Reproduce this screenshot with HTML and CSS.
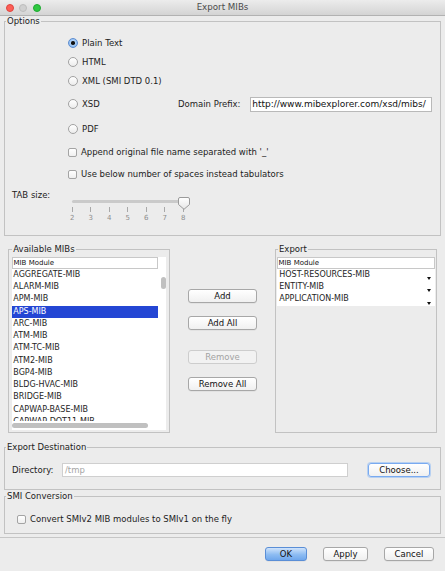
FILE: index.html
```html
<!DOCTYPE html>
<html lang="en">
<head>
<meta charset="utf-8">
<title>Export MIBs</title>
<link rel="stylesheet" href="styles.css">
</head>
<body>
<div class="titlebar">
  <div class="lights"><span class="light red"></span><span class="light gray"></span><span class="light green"></span></div>
  <div class="title">Export MIBs</div>
  <div></div>
</div>

<fieldset class="group options">
  <legend>Options</legend>
  <div class="options-body">
    <div class="opt r1"><span class="radio on"></span><span class="lbl">Plain Text</span></div>
    <div class="opt r2"><span class="radio"></span><span class="lbl">HTML</span></div>
    <div class="opt r3"><span class="radio"></span><span class="lbl">XML (SMI DTD 0.1)</span></div>
    <div class="opt r4">
      <div class="xsd-choice"><span class="radio"></span><span class="lbl">XSD</span></div>
      <span class="prefix-label">Domain Prefix:</span>
      <div class="field prefix">http://www.mibexplorer.com/xsd/mibs/</div>
    </div>
    <div class="opt r5"><span class="radio"></span><span class="lbl">PDF</span></div>
    <div class="opt r6"><span class="check"></span><span class="lbl">Append original file name separated with '_'</span></div>
    <div class="opt r7"><span class="check"></span><span class="lbl">Use below number of spaces instead tabulators</span></div>
    <div class="tab-row">
      <span class="tab-label">TAB size:</span>
      <div class="slider">
        <div class="track"></div>
        <div class="ticks">
          <span class="tick">2</span><span class="tick">3</span><span class="tick">4</span><span class="tick">5</span><span class="tick">6</span><span class="tick">7</span><span class="tick">8</span>
        </div>
        <svg class="thumb" width="12" height="13" viewBox="0 0 12 13"><defs><linearGradient id="tg" x1="0" y1="0" x2="0" y2="1"><stop offset="0" stop-color="#ffffff"/><stop offset="1" stop-color="#e6e6e6"/></linearGradient></defs><path d="M2 0.5H10Q11.5 0.5 11.5 2V7.5L6 12.3L0.5 7.5V2Q0.5 0.5 2 0.5Z" fill="url(#tg)" stroke="#9a9a9a" stroke-width="1"/></svg>
      </div>
    </div>
  </div>
</fieldset>

<div class="lists">
  <fieldset class="group mib-group avail">
    <legend>Available MIBs</legend>
    <div class="list-wrap">
      <div class="list">
        <div class="list-main">
          <div class="col-header">MIB Module</div>
          <div class="rows">
            <div class="row">AGGREGATE-MIB</div>
            <div class="row">ALARM-MIB</div>
            <div class="row">APM-MIB</div>
            <div class="row selected">APS-MIB</div>
            <div class="row">ARC-MIB</div>
            <div class="row">ATM-MIB</div>
            <div class="row">ATM-TC-MIB</div>
            <div class="row">ATM2-MIB</div>
            <div class="row">BGP4-MIB</div>
            <div class="row">BLDG-HVAC-MIB</div>
            <div class="row">BRIDGE-MIB</div>
            <div class="row">CAPWAP-BASE-MIB</div>
            <div class="row">CAPWAP-DOT11-MIB</div>
          </div>
          <div class="hscroll"><div class="hthumb"></div></div>
        </div>
        <div class="vscroll"><div class="vthumb"></div></div>
      </div>
    </div>
  </fieldset>

  <div class="mid-buttons">
    <div class="btn">Add</div>
    <div class="btn add-all">Add All</div>
    <div class="btn remove disabled">Remove</div>
    <div class="btn remove-all">Remove All</div>
  </div>

  <fieldset class="group mib-group export">
    <legend>Export</legend>
    <div class="export-wrap">
      <div class="col-header">MIB Module</div>
      <div class="export-rows">
        <div class="row"><span>HOST-RESOURCES-MIB</span><span class="arrow"></span></div>
        <div class="row"><span>ENTITY-MIB</span><span class="arrow"></span></div>
        <div class="row"><span>APPLICATION-MIB</span><span class="arrow"></span></div>
      </div>
    </div>
  </fieldset>
</div>

<fieldset class="group dest">
  <legend>Export Destination</legend>
  <div class="dest-body">
    <span class="dir-label">Directory:</span>
    <div class="field dir">/tmp</div>
    <div class="btn choose">Choose...</div>
  </div>
</fieldset>

<fieldset class="group smi">
  <legend>SMI Conversion</legend>
  <div class="smi-body">
    <span class="check"></span><span class="lbl">Convert SMIv2 MIB modules to SMIv1 on the fly</span>
  </div>
</fieldset>

<div class="footer">
  <div class="btn ok">OK</div>
  <div class="btn apply">Apply</div>
  <div class="btn cancel">Cancel</div>
</div>
</body>
</html>
```

FILE: styles.css
```css
* { box-sizing: border-box; }
html, body { margin: 0; padding: 0; }
body {
  width: 445px;
  height: 571px;
  overflow: hidden;
  background: #ececec;
  font-family: "DejaVu Sans", "Liberation Sans", sans-serif;
  font-size: 8.5px;
  color: #1c1c1c;
}

/* title bar */
.titlebar {
  height: 16px;
  display: grid;
  grid-template-columns: 1fr auto 1fr;
  align-items: center;
  background: linear-gradient(#ececec, #d4d4d4);
  border-bottom: 1px solid #b2b2b2;
}
.lights { display: flex; gap: 5.3px; padding-left: 6px; }
.light { width: 8px; height: 8px; border-radius: 50%; }
.light.red { background: #fc5f57; border: 0.5px solid #e0443e; }
.light.gray { background: #d0d0d0; border: 0.5px solid #bdbdbd; }
.light.green { background: #2ec840; border: 0.5px solid #1ea930; }
.title { font-size: 8.7px; color: #4b4b4b; line-height: 1; }

/* group boxes */
.group {
  border: 1px solid #c2c2c2;
  margin: 0 4px;
  padding: 0;
  min-width: 0;
}
.group > legend {
  padding: 0 1px;
  margin-left: 1px;
  line-height: 11px;
  font-size: 8.5px;
  color: #1c1c1c;
}

/* options */
.options-body { padding: 9px 0 12.5px 0; }
.opt { display: flex; align-items: center; height: 14px; padding-left: 63px; }
.r2, .r3 { margin-top: 5px; }
.r4 { margin-top: 8px; height: 16px; }
.r5 { margin-top: 10px; }
.r6 { margin-top: 9px; }
.r7 { margin-top: 8px; }
.lbl { margin-left: 4px; white-space: nowrap; }

.radio {
  width: 10px; height: 10px; border-radius: 50%;
  border: 1px solid #a2a2a2;
  background: linear-gradient(#ffffff, #ececec);
  flex: none;
  display: flex; align-items: center; justify-content: center;
}
.radio.on {
  border-color: #5d8cd0;
  background: radial-gradient(circle at 50% 45%, #d6e8fc 0%, #8dbcf1 70%, #6aa2e8 100%);
}
.radio.on::after {
  content: ""; width: 3.5px; height: 3.5px; border-radius: 50%; background: #111;
}
.check {
  width: 9px; height: 9px; border-radius: 2px;
  border: 1px solid #a4a4a4;
  background: linear-gradient(#ffffff, #efefef);
  flex: none;
}

.xsd-choice { display: flex; align-items: center; width: 110px; }
.prefix-label { width: 71.7px; white-space: nowrap; }
.field {
  background: #fff;
  border: 1px solid #b9b9b9;
  white-space: nowrap;
  overflow: hidden;
}
.field.prefix {
  width: 182px; height: 15px;
  font-size: 9px; line-height: 13px;
  padding-left: 1.5px;
  color: #111;
}

/* slider */
.tab-row { display: flex; align-items: flex-start; margin-top: 9px; padding-left: 7px; }
.tab-label { width: 51px; line-height: 11px; white-space: nowrap; }
.slider { position: relative; width: 130px; }
.track {
  margin-top: 9.5px; margin-left: 9.3px;
  width: 114.4px; height: 3px; border-radius: 2px;
  background: #cacaca;
}
.ticks { display: grid; grid-template-columns: repeat(7, 18.5px); margin-top: 4.8px; }
.tick {
  display: flex; flex-direction: column; align-items: center;
  font-size: 7px; line-height: 8px; color: #8c8c8c;
}
.tick::before {
  content: ""; width: 1px; height: 4.4px; background: #a8a8a8; margin-bottom: 2.8px;
}
.thumb { position: absolute; left: 114.7px; top: 7.3px; }

/* lists */
.lists {
  display: flex; align-items: flex-start; gap: 18px;
  padding: 0 8px; margin-top: 8.5px;
}
.mib-group { width: 162px; margin: 0; flex: none; }
.avail > legend { margin-left: 3.3px; }
.export > legend { margin-left: 2px; }

.list-wrap { padding: 1.5px 3px 2px 3px; }
.list { background: #fff; height: 173px; display: flex; }
.list-main { width: 146px; display: flex; flex-direction: column; }
.col-header {
  height: 12px; flex: none;
  border: 1px solid #c8c8c8;
  background: #fff;
  font-size: 7px; line-height: 10px;
  padding-left: 0.5px;
  color: #111;
}
.rows { height: 152px; overflow: hidden; flex: none; }
.row {
  height: 12.25px; line-height: 12.25px;
  font-size: 8px; padding-left: 1.3px;
  white-space: nowrap; color: #1e1e1e;
}
.row.selected { background: #2446d4; color: #fff; }
.hscroll { height: 9px; padding-top: 1.7px; }
.hthumb { width: 135.7px; height: 5.6px; border-radius: 3px; background: #c0c0c0; }
.vscroll { width: 8px; padding-top: 20px; padding-left: 3px; }
.vthumb { width: 4.7px; height: 12px; border-radius: 2.5px; background: #c0c0c0; }

.export-wrap { padding: 1.5px 1px 0 1px; height: 176.5px; }
.export-rows { background: #fff; }
.export-rows .row {
  display: flex; justify-content: space-between;
  padding-left: 2.3px;
}
.arrow {
  width: 0; height: 0;
  border-left: 2px solid transparent;
  border-right: 2px solid transparent;
  border-top: 3px solid #111;
  align-self: flex-end;
  margin: 0 4px 1px 0;
}

/* buttons */
.mid-buttons { width: 69px; flex: none; display: flex; flex-direction: column; padding-top: 44.5px; }
.btn {
  height: 14px;
  border: 1px solid #a7a7a7;
  border-radius: 3px;
  background: linear-gradient(#ffffff, #f0f0f0);
  box-shadow: 0 0.5px 0 rgba(0,0,0,0.08);
  font-size: 8.5px; line-height: 12px;
  text-align: center; white-space: nowrap;
  color: #111;
}
.add-all { margin-top: 13px; }
.remove { margin-top: 20px; }
.remove-all { margin-top: 13px; }
.btn.disabled { color: #a3a3a3; border-color: #cdcdcd; background: #f2f2f2; box-shadow: none; }

/* destination */
.dest { margin-top: 9.2px; }
.dest-body { display: flex; align-items: center; padding: 10px 10px 12px 7px; }
.dir-label { width: 50px; white-space: nowrap; }
.field.dir {
  flex: 1; height: 14px;
  border-color: #cfcfcf;
  color: #a6a6a6; line-height: 12px; padding-left: 2px;
  margin-right: 20px;
}
.btn.choose {
  width: 62px; flex: none;
  border-color: #79aaf0;
  box-shadow: 0 0 0 1px rgba(140,185,245,0.55);
}

/* smi */
.smi { margin-top: 1.3px; }
.smi-body { display: flex; align-items: center; height: 31px; padding: 10px 0 7px 12px; }

/* footer */
.footer {
  margin-top: 2.5px;
  border-top: 1px solid #c6c6c6;
  display: flex; justify-content: flex-end; gap: 16px;
  padding: 9px 11px 0 0;
}
.btn.ok {
  width: 42px;
  border-color: #5a8ed6;
  background: linear-gradient(#cfe3fb, #8dbcf2 55%, #6fa7ec);
}
.btn.apply { width: 45px; }
.btn.cancel { width: 50px; }
```
